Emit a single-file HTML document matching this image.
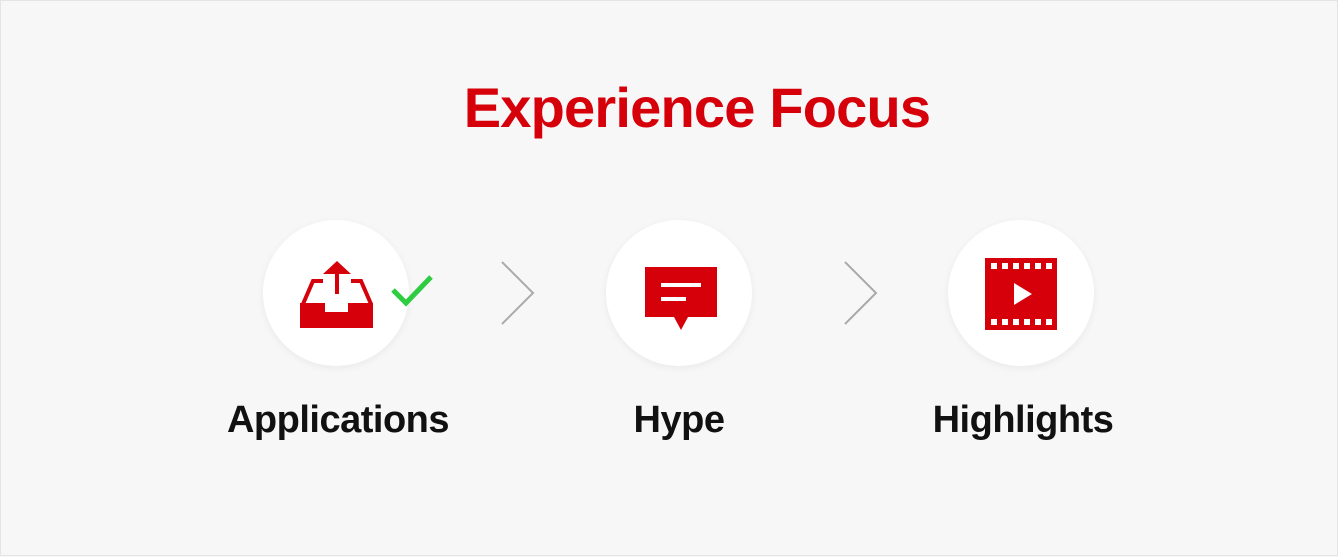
<!DOCTYPE html><html><head><style>
body{margin:0;width:1338px;height:556px;background:#f7f7f7;font-family:"Liberation Sans",sans-serif;position:relative;overflow:hidden;border:1px solid #e4e4e4;box-sizing:border-box}
.t{position:absolute;top:74px;left:0;width:1392px;text-align:center;color:#d6000a;font-size:56px;font-weight:bold;letter-spacing:-0.8px}
.c{position:absolute;top:219px;width:146px;height:146px;border-radius:50%;background:#fff;box-shadow:0 2px 8px rgba(0,0,0,.06)}
.l{position:absolute;top:398px;width:300px;text-align:center;font-size:38px;font-weight:bold;color:#111;letter-spacing:-0.5px}
svg{position:absolute;left:0;top:0}
</style></head><body>
<div class="t">Experience Focus</div>
<div class="c" style="left:262px"></div>
<div class="c" style="left:605px"></div>
<div class="c" style="left:947px"></div>
<svg width="1338" height="556">
<g fill="#d6000a">
<polygon points="299,302 324,302 324,311 347,311 347,302 372,302 372,327 299,327"/>
<polyline points="322,280 312,280 302,303" fill="none" stroke="#d6000a" stroke-width="4"/>
<polyline points="350,280 360,280 370,303" fill="none" stroke="#d6000a" stroke-width="4"/>
<rect x="334" y="270" width="4" height="23"/>
<polygon points="336,260 322,273 350,273"/>
<path d="M644,266h72v50h-29l-7,13l-7,-13h-29z"/>
<rect x="984" y="257" width="72" height="72"/>
</g>
<rect x="660" y="282" width="40" height="4" fill="#fff"/>
<rect x="660" y="296" width="25" height="4" fill="#fff"/>
<g fill="#fff">
<rect x="990" y="262" width="6" height="6"/><rect x="1001" y="262" width="6" height="6"/><rect x="1012" y="262" width="6" height="6"/><rect x="1023" y="262" width="6" height="6"/><rect x="1034" y="262" width="6" height="6"/><rect x="1045" y="262" width="6" height="6"/>
<rect x="990" y="318" width="6" height="6"/><rect x="1001" y="318" width="6" height="6"/><rect x="1012" y="318" width="6" height="6"/><rect x="1023" y="318" width="6" height="6"/><rect x="1034" y="318" width="6" height="6"/><rect x="1045" y="318" width="6" height="6"/>
<polygon points="1013,282 1031,293 1013,304"/>
</g>
<polyline points="392,289 405,302 430,276" fill="none" stroke="#2ecc40" stroke-width="5"/>
<polyline points="501,261 532,292 501,323" fill="none" stroke="#aaa" stroke-width="2"/>
<polyline points="844,261 875,292 844,323" fill="none" stroke="#aaa" stroke-width="2"/>
</svg>
<div class="l" style="left:187px">Applications</div>
<div class="l" style="left:528px">Hype</div>
<div class="l" style="left:872px">Highlights</div>
</body></html>
